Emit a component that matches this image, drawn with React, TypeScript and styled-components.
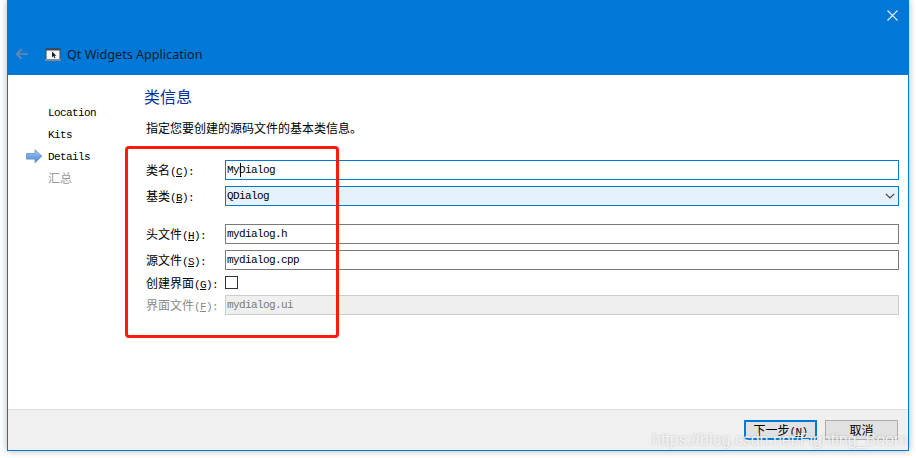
import React from 'react';
import styled, { createGlobalStyle } from 'styled-components';

const GlobalStyle = createGlobalStyle`
  html, body {
    margin: 0;
    padding: 0;
    width: 916px;
    height: 458px;
    overflow: hidden;
    background: #ffffff;
  }
`;

const cjk = `"Noto Sans CJK SC", sans-serif`;
const mono = `"Liberation Mono", "Noto Sans CJK SC", monospace`;

const Page = styled.div`
  position: relative;
  width: 916px;
  height: 458px;
  padding: 0 7px 7px;
  box-sizing: border-box;
  overflow: hidden;
`;

const Window = styled.div`
  height: 451px;
  display: flex;
  flex-direction: column;
  box-sizing: border-box;
  border: 1px solid #0078d7;
  border-top: none;
  background: #ffffff;
  box-shadow: 0 0 7px rgba(0, 0, 0, 0.3);
`;

const Header = styled.header`
  height: 75px;
  flex: none;
  margin: 0 -1px;
  background: #0078d7;
  display: flex;
  flex-direction: column;
  justify-content: space-between;
`;

const CloseRow = styled.div`
  display: flex;
  justify-content: flex-end;
  padding: 10px 11px 0 0;
`;

const TitleRow = styled.div`
  display: flex;
  align-items: center;
  height: 20px;
  margin-bottom: 11px;
  padding-left: 8px;
`;

const AppTitle = styled.span`
  margin-left: 6px;
  font: 12.6px "Noto Sans", sans-serif;
  color: #0b1d33;
`;

const Body = styled.div`
  flex: 1;
  display: flex;
  min-height: 0;
`;

const Sidebar = styled.nav`
  width: 136px;
  flex: none;
  box-sizing: border-box;
  padding-top: 29px;
  display: flex;
  flex-direction: column;
  gap: 4px;
`;

const Step = styled.div<{ $muted?: boolean }>`
  height: 18px;
  display: flex;
  align-items: center;
  padding-left: 40px;
  position: relative;
  margin-top: ${(p) => (p.$muted ? '-2px' : '0')};
  font: ${(p) => (p.$muted ? `12px ${cjk}` : `11px ${mono}`)};
  letter-spacing: ${(p) => (p.$muted ? '0' : '-0.6px')};
  color: ${(p) => (p.$muted ? '#9a9a9a' : '#000000')};
`;

const StepArrow = styled.svg`
  position: absolute;
  left: 18px;
  top: 1px;
`;

const Main = styled.main`
  flex: 1;
  min-width: 0;
  padding: 10px 9px 0 0;
`;

const PageTitle = styled.h1`
  margin: 0;
  height: 23px;
  font: 400 16px/23px ${cjk};
  color: #003399;
`;

const Subtitle = styled.p`
  margin: 11px 0 0 2px;
  height: 18px;
  font: 12px/18px ${cjk};
  color: #000000;
`;

const Form = styled.div`
  margin-top: 23px;
  display: flex;
  flex-direction: column;
  gap: 6px;
`;

const Row = styled.div<{ $spaced?: boolean; $compact?: boolean }>`
  display: flex;
  align-items: center;
  height: ${(p) => (p.$compact ? '13px' : '20px')};
  margin-top: ${(p) => (p.$spaced ? '12px' : '0')};
`;

const Label = styled.label<{ $muted?: boolean }>`
  width: 79px;
  flex: none;
  margin-left: 2px;
  font: 12px/20px ${cjk};
  color: ${(p) => (p.$muted ? '#8a8a8a' : '#000000')};
  white-space: nowrap;
`;

const Mnemonic = styled.span`
  font: 11px ${mono};
  letter-spacing: -0.6px;
  text-decoration: underline;
`;

const Paren = styled.span`
  font: 11px ${mono};
  letter-spacing: -0.6px;
`;

const Field = styled.div<{ $variant?: 'focus' | 'select' | 'disabled' }>`
  flex: 1;
  height: 20px;
  box-sizing: border-box;
  position: relative;
  display: flex;
  align-items: center;
  padding-left: 1px;
  font: 11px ${mono};
  letter-spacing: -0.6px;
  border: 1px solid
    ${(p) =>
      p.$variant === 'focus' || p.$variant === 'select'
        ? '#0078d7'
        : p.$variant === 'disabled'
        ? '#cccccc'
        : '#7a7a7a'};
  background: ${(p) =>
    p.$variant === 'select'
      ? '#e5f1fb'
      : p.$variant === 'disabled'
      ? '#efefef'
      : '#ffffff'};
  color: ${(p) => (p.$variant === 'disabled' ? '#7a7a7a' : '#000000')};
`;

const Caret = styled.i`
  position: absolute;
  left: 14px;
  top: 2px;
  width: 1px;
  height: 14px;
  background: #000000;
`;

const Chevron = styled.svg`
  position: absolute;
  right: 3px;
  top: 6px;
`;

const Checkbox = styled.span`
  width: 13px;
  height: 13px;
  box-sizing: border-box;
  border: 1px solid #333333;
  background: #ffffff;
`;

const Footer = styled.footer`
  height: 41px;
  flex: none;
  box-sizing: border-box;
  border-top: 1px solid #dfdfdf;
  background: #f0f0f0;
  display: flex;
  justify-content: flex-end;
  align-items: flex-start;
  gap: 8px;
  padding: 10px 10px 0 0;
`;

const Button = styled.button<{ $primary?: boolean }>`
  width: 73px;
  height: 20px;
  padding: 0;
  box-sizing: border-box;
  background: #e1e1e1;
  border: ${(p) => (p.$primary ? '2px solid #0078d7' : '1px solid #adadad')};
  font: 12px/16px ${cjk};
  color: #000000;
`;

const Highlight = styled.div`
  position: absolute;
  left: 125px;
  top: 146px;
  width: 214px;
  height: 192px;
  box-sizing: border-box;
  border: 3px solid #ff1a0d;
  border-radius: 4px;
  pointer-events: none;
`;

const Watermark = styled.div`
  position: absolute;
  left: 652px;
  top: 431px;
  font: 16px/18px "Liberation Sans", sans-serif;
  color: rgba(255, 255, 255, 0.8);
  text-shadow: 0 0 2px rgba(130, 130, 130, 0.55);
  white-space: nowrap;
  pointer-events: none;
`;

const BackIcon = () => (
  <svg width="13" height="12" viewBox="0 0 13 12" fill="none" stroke="#6f8aa9" strokeWidth="1.7">
    <path d="M13 6H2M6.5 1.2 1.8 6l4.7 4.8" />
  </svg>
);

const CloseIcon = () => (
  <svg width="11" height="11" viewBox="0 0 11 11" stroke="#e8f2fb" strokeWidth="1.1">
    <path d="M.5.5l10 10M10.5.5l-10 10" />
  </svg>
);

const AppIcon = () => (
  <svg width="16" height="13" viewBox="0 0 16 13" style={{ marginLeft: 17 }}>
    <rect x="1" y="0.5" width="14" height="11" fill="#f4f6f8" stroke="#3d4a5c" />
    <rect x="1" y="0.5" width="14" height="2" fill="#3d4a5c" />
    <rect x="0" y="11" width="16" height="2" fill="#7f8a99" />
    <path d="M7 3.5v6l1.5-1.4 1 2.1.9-.4-1-2h2z" fill="#1a1a1a" />
  </svg>
);

const CurrentArrow = () => (
  <StepArrow width="17" height="15" viewBox="0 0 17 15">
    <defs>
      <linearGradient id="arrowFill" x1="0" y1="0" x2="0" y2="1">
        <stop offset="0" stopColor="#a9cdf5" />
        <stop offset="1" stopColor="#3f83d8" />
      </linearGradient>
    </defs>
    <path d="M.5 4.5h8.5V.8L16 7.2l-7 6.5v-3.6H.5z" fill="url(#arrowFill)" stroke="#7f9cc4" />
  </StepArrow>
);

type FieldLabelProps = {
  text: string;
  mnemonic: string;
  muted?: boolean;
};

const FieldLabel = ({ text, mnemonic, muted }: FieldLabelProps): JSX.Element => (
  <Label $muted={muted}>
    {text}
    <Paren>(</Paren>
    <Mnemonic>{mnemonic}</Mnemonic>
    <Paren>):</Paren>
  </Label>
);

const App = (): JSX.Element => (
  <Page>
    <GlobalStyle />
    <Window>
      <Header>
        <CloseRow>
          <CloseIcon />
        </CloseRow>
        <TitleRow>
          <BackIcon />
          <AppIcon />
          <AppTitle>Qt Widgets Application</AppTitle>
        </TitleRow>
      </Header>
      <Body>
        <Sidebar>
          <Step>Location</Step>
          <Step>Kits</Step>
          <Step>
            <CurrentArrow />
            Details
          </Step>
          <Step $muted>汇总</Step>
        </Sidebar>
        <Main>
          <PageTitle>类信息</PageTitle>
          <Subtitle>指定您要创建的源码文件的基本类信息。</Subtitle>
          <Form>
            <Row>
              <FieldLabel text="类名" mnemonic="C" />
              <Field $variant="focus">
                MyDialog
                <Caret />
              </Field>
            </Row>
            <Row>
              <FieldLabel text="基类" mnemonic="B" />
              <Field $variant="select">
                QDialog
                <Chevron width="10" height="6" viewBox="0 0 10 6" fill="none" stroke="#444444" strokeWidth="1.2">
                  <path d="M.8.8 5 5l4.2-4.2" />
                </Chevron>
              </Field>
            </Row>
            <Row $spaced>
              <FieldLabel text="头文件" mnemonic="H" />
              <Field>mydialog.h</Field>
            </Row>
            <Row>
              <FieldLabel text="源文件" mnemonic="S" />
              <Field>mydialog.cpp</Field>
            </Row>
            <Row $compact>
              <FieldLabel text="创建界面" mnemonic="G" />
              <Checkbox />
            </Row>
            <Row>
              <FieldLabel text="界面文件" mnemonic="F" muted />
              <Field $variant="disabled">mydialog.ui</Field>
            </Row>
          </Form>
        </Main>
      </Body>
      <Footer>
        <Button $primary>
          下一步<Paren>(</Paren>
          <Mnemonic>N</Mnemonic>
          <Paren>)</Paren>
        </Button>
        <Button>取消</Button>
      </Footer>
    </Window>
    <Highlight />
    <Watermark>https://blog.csdn.net/Fighting_Boom</Watermark>
  </Page>
);

export default App;
